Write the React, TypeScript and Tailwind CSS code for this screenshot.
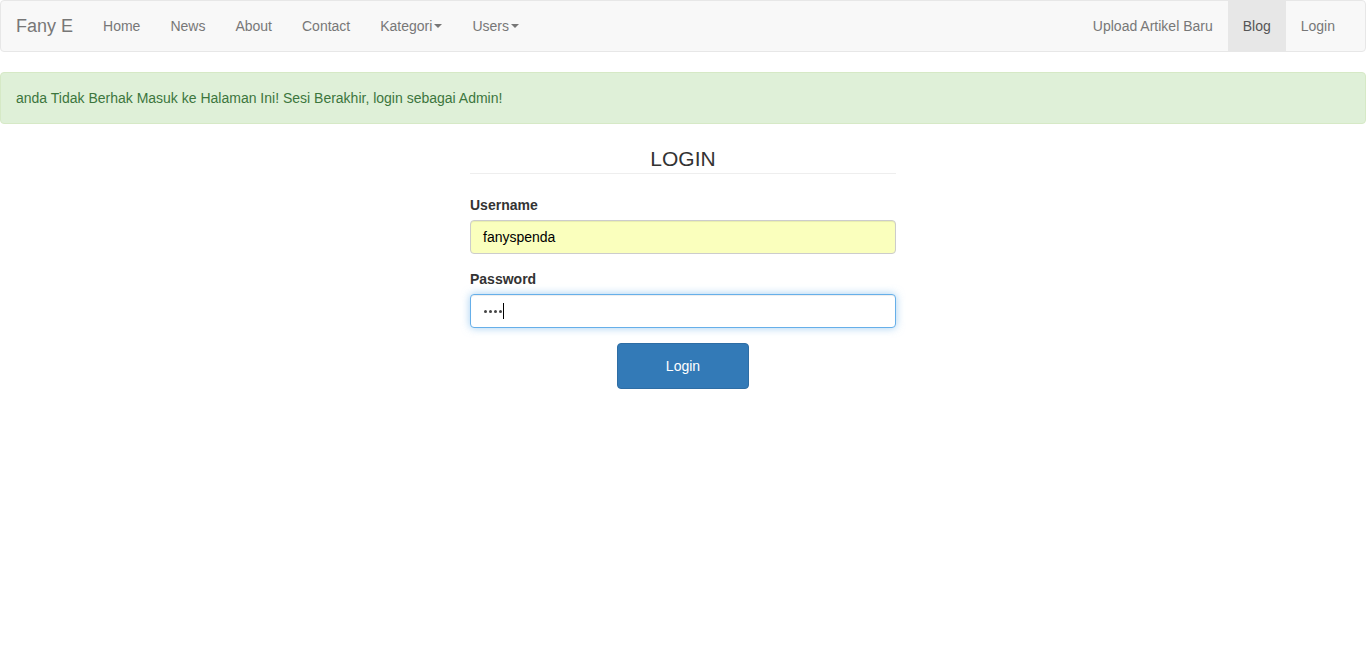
import React from "react";

const Caret = () => (
  <span className="inline-block w-0 h-0 ml-[2px] align-middle border-t-4 border-x-4 border-x-transparent border-t-[#777]" />
);

export default function App() {
  const left = ["Home", "News", "About", "Contact"];
  return (
    <div className="min-h-[650px] bg-white text-[14px] leading-[20px] text-[#333] font-['Liberation_Sans',Arial,Helvetica,sans-serif]">
      <nav className="h-[52px] flex items-stretch justify-between bg-[#f8f8f8] border border-[#e7e7e7] rounded-[4px] mb-5">
        <div className="flex items-stretch pl-[15px]">
          <a className="flex items-center pr-[15px] text-[18px] leading-[20px] text-[#777]">Fany E</a>
          {left.map((l) => (
            <a key={l} className="flex items-center px-[15px] text-[#777]">{l}</a>
          ))}
          <a className="flex items-center px-[15px] text-[#777]">Kategori<Caret /></a>
          <a className="flex items-center px-[15px] text-[#777]">Users<Caret /></a>
        </div>
        <div className="flex items-stretch pr-[15px]">
          <a className="flex items-center px-[15px] text-[#777]">Upload Artikel Baru</a>
          <a className="flex items-center px-[15px] text-[#555] bg-[#e7e7e7]">Blog</a>
          <a className="flex items-center px-[15px] text-[#777]">Login</a>
        </div>
      </nav>

      <div className="p-[15px] bg-[#dff0d8] border border-[#d6e9c6] text-[#3c763d] rounded-[4px] mb-5">
        anda Tidak Berhak Masuk ke Halaman Ini! Sesi Berakhir, login sebagai Admin!
      </div>

      <div className="w-[426px] mx-auto pt-[3px]">
        <h3 className="text-[21px] leading-[24px] text-center text-[#333] pb-[2px] border-b border-[#eee] mb-[21px]">LOGIN</h3>
        <div className="mb-[15px]">
          <label className="block font-bold mb-[5px]">Username</label>
          <div className="h-[34px] flex items-center px-[12px] bg-[#faffbd] border border-[#ccc] rounded-[4px] text-[#000] shadow-[inset_0_1px_1px_rgba(0,0,0,0.075)]">
            fanyspenda
          </div>
        </div>
        <div className="mb-[15px]">
          <label className="block font-bold mb-[5px]">Password</label>
          <div className="h-[34px] flex items-center px-[13px] bg-white border border-[#66afe9] rounded-[4px] text-[#000] shadow-[inset_0_1px_1px_rgba(0,0,0,0.075),0_0_8px_rgba(102,175,233,0.6)]">
            <span className="flex items-center gap-[2px]" aria-label="password">
              <span className="w-[3px] h-[3px] rounded-full bg-[#444]" />
              <span className="w-[3px] h-[3px] rounded-full bg-[#444]" />
              <span className="w-[3px] h-[3px] rounded-full bg-[#444]" />
              <span className="w-[3px] h-[3px] rounded-full bg-[#444]" />
            </span>
            <span className="inline-block w-px h-[16px] bg-[#000] ml-[1px]" />
          </div>
        </div>
        <div className="flex justify-center">
          <button className="w-[132px] h-[46px] bg-[#337ab7] border border-[#2e6da4] rounded-[4px] text-white text-[14px]">Login</button>
        </div>
      </div>
    </div>
  );
}
